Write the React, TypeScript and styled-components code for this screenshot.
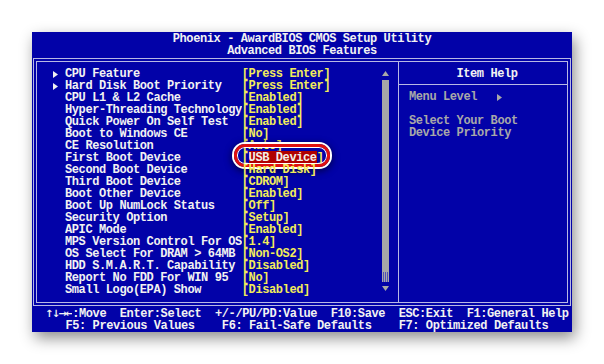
import React from 'react';
import styled, { createGlobalStyle } from 'styled-components';

const GlobalStyle = createGlobalStyle`
    body {
        margin: 0;
        background: #ffffff;
    }
`;

type Item = { label: string; value: string; sub?: boolean; selected?: boolean };

const items: Item[] = [
    { label: 'CPU Feature', value: '[Press Enter]', sub: true },
    { label: 'Hard Disk Boot Priority', value: '[Press Enter]', sub: true },
    { label: 'CPU L1 & L2 Cache', value: '[Enabled]' },
    { label: 'Hyper-Threading Technology', value: '[Enabled]' },
    { label: 'Quick Power On Self Test', value: '[Enabled]' },
    { label: 'Boot to Windows CE', value: '[No]' },
    { label: 'CE Resolution', value: '[Auto]' },
    { label: 'First Boot Device', value: 'USB Device', selected: true },
    { label: 'Second Boot Device', value: '[Hard Disk]' },
    { label: 'Third Boot Device', value: '[CDROM]' },
    { label: 'Boot Other Device', value: '[Enabled]' },
    { label: 'Boot Up NumLock Status', value: '[Off]' },
    { label: 'Security Option', value: '[Setup]' },
    { label: 'APIC Mode', value: '[Enabled]' },
    { label: 'MPS Version Control For OS', value: '[1.4]' },
    { label: 'OS Select For DRAM > 64MB', value: '[Non-OS2]' },
    { label: 'HDD S.M.A.R.T. Capability', value: '[Disabled]' },
    { label: 'Report No FDD For WIN 95', value: '[No]' },
    { label: 'Small Logo(EPA) Show', value: '[Disabled]' },
];

const Triangle = ({ dir, color }: { dir: 'right' | 'up' | 'down'; color: string }) => {
    const points = dir === 'right' ? '0,0 5,3.5 0,7' : dir === 'up' ? '0,5 3.5,0 7,5' : '0,0 7,0 3.5,5';
    const w = dir === 'right' ? 5 : 7;
    const h = dir === 'right' ? 7 : 5;
    return (
        <svg width={w} height={h} viewBox={`0 0 ${w} ${h}`}>
            <polygon points={points} fill={color} />
        </svg>
    );
};

export default function App() {
    return (
        <Page>
            <GlobalStyle />
            <Screen>
                <Title>
                    <div>Phoenix - AwardBIOS CMOS Setup Utility</div>
                    <div>Advanced BIOS Features</div>
                </Title>
                <Frame>
                    <Main>
                        <RowList>
                            {items.map((item) => (
                                <Row key={item.label}>
                                    <Marker>{item.sub && <Triangle dir="right" color="#f0f0f0" />}</Marker>
                                    <Label>{item.label}</Label>
                                    <Value>
                                        {item.selected ? (
                                            <>
                                                [<Selected>{item.value}</Selected>]
                                                <Circle />
                                            </>
                                        ) : (
                                            item.value
                                        )}
                                    </Value>
                                </Row>
                            ))}
                        </RowList>
                        <ScrollBar>
                            <ScrollArrow><Triangle dir="up" color="#a8a8a8" /></ScrollArrow>
                            <Thumb />
                            <ThumbEnd />
                            <ScrollArrow><Triangle dir="down" color="#a8a8a8" /></ScrollArrow>
                        </ScrollBar>
                    </Main>
                    <Help>
                        <HelpHeader>Item Help</HelpHeader>
                        <HelpBody>
                            <HelpLine>
                                Menu Level   <Triangle dir="right" color="#a8a8a8" />
                            </HelpLine>
                            <HelpLine> </HelpLine>
                            <HelpLine>Select Your Boot</HelpLine>
                            <HelpLine>Device Priority</HelpLine>
                        </HelpBody>
                    </Help>
                </Frame>
                <Footer>
                    <div>
                        <Arrows>↑↓→←</Arrows>
                        {':Move  Enter:Select  +/-/PU/PD:Value  F10:Save  ESC:Exit  F1:General Help'}
                    </div>
                    <div>{'   F5: Previous Values    F6: Fail-Safe Defaults    F7: Optimized Defaults'}</div>
                </Footer>
            </Screen>
        </Page>
    );
}

const Page = styled.div`
    padding: 32px 0 0 32px;
    height: 364px;
    box-sizing: border-box;
`;

const Screen = styled.div`
    width: 540px;
    height: 300px;
    background: #0202a8;
    box-shadow: 3px 6px 14px rgba(0, 0, 0, 0.45);
    font-family: "Liberation Mono", "DejaVu Sans Mono", monospace;
    font-weight: bold;
    font-size: 12px;
    letter-spacing: -0.4px;
    line-height: 12px;
    color: #f2f2f2;
    display: flex;
    flex-direction: column;
`;

const Title = styled.div`
    text-align: center;
    height: 25px;
    box-sizing: border-box;
    padding-top: 1px;
    margin-bottom: 1px;
`;

const Frame = styled.div`
    margin-left: 1px;
    width: 538px;
    height: 248px;
    box-sizing: border-box;
    border: 4px double #b8b8e4;
    display: flex;
`;

const Main = styled.div`
    width: 361px;
    box-sizing: border-box;
    padding: 6px 9px 0 14px;
    display: flex;
`;

const RowList = styled.div`
    flex: 1;
    display: flex;
    flex-direction: column;
`;

const Row = styled.div`
    display: flex;
    height: 12px;
    white-space: pre;
`;

const Marker = styled.span`
    width: 14px;
    display: flex;
    align-items: center;
    padding-left: 2px;
    box-sizing: border-box;
`;

const Label = styled.span`
    width: 176.8px;
    overflow: hidden;
`;

const Value = styled.span`
    position: relative;
    color: #f2ec5a;
`;

const Selected = styled.span`
    background: #b00000;
    color: #f4f0e8;
`;

const Circle = styled.span`
    position: absolute;
    left: -8px;
    top: -8px;
    width: 96px;
    height: 23px;
    box-sizing: border-box;
    border: 3px solid #e01010;
    border-radius: 11px;
    box-shadow: 0 0 0 2px #ffffff, inset 0 0 0 1px #ffffff, 0 2px 6px 3px rgba(0, 0, 40, 0.6);
`;

const ScrollBar = styled.div`
    width: 7px;
    margin-top: -1px;
    display: flex;
    flex-direction: column;
    align-items: center;
`;

const ScrollArrow = styled.div`
    height: 12px;
    display: flex;
    align-items: center;
    justify-content: center;
`;

const Thumb = styled.div`
    width: 7px;
    height: 192px;
    margin-top: 1px;
    background: #a8a8a8;
`;

const ThumbEnd = styled.div`
    width: 7px;
    height: 10px;
    background: repeating-linear-gradient(90deg, #a8a8a8 0 1px, #5050b8 1px 2px);
`;

const Help = styled.div`
    flex: 1;
    border-left: 1px solid #b8b8e4;
    display: flex;
    flex-direction: column;
`;

const HelpHeader = styled.div`
    height: 23px;
    box-sizing: border-box;
    padding-top: 6px;
    padding-left: 8px;
    text-align: center;
    border-bottom: 1px solid #b8b8e4;
`;

const HelpBody = styled.div`
    padding: 6px 0 0 10px;
    color: #a8a8a8;
`;

const HelpLine = styled.div`
    height: 12px;
    white-space: pre;
    display: flex;
    align-items: center;
`;

const Footer = styled.div`
    margin-top: 2px;
    padding-left: 13px;
    white-space: pre;
`;

const Arrows = styled.span`
    display: inline-block;
    width: 27.2px;
    overflow: hidden;
    vertical-align: top;
    font-family: "DejaVu Sans", sans-serif;
    font-weight: bold;
    font-size: 10px;
    letter-spacing: -1.6px;
`;
